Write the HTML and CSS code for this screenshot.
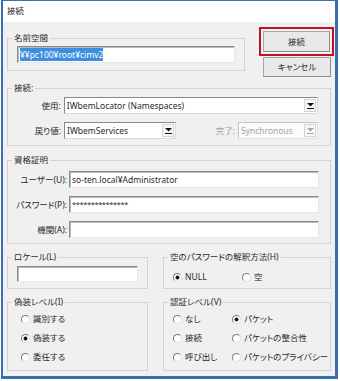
FILE: index.html
```html
<!DOCTYPE html>
<html lang="ja">
<head>
<meta charset="utf-8">
<title>接続</title>
<link rel="stylesheet" href="styles.css">
</head>
<body>
<div class="window">
  <div class="titlebar">接続</div>
  <div class="client">
    <div class="row-top">
      <fieldset class="group ns">
        <legend>名前空間</legend>
        <div class="inner ns-inner">
          <div class="field"><span class="selected">¥¥pc100¥root¥cimv2</span></div>
        </div>
      </fieldset>
      <div class="buttons">
        <div class="focus-ring"><div class="btn btn-ok">接続</div></div>
        <div class="btn btn-cancel">キャンセル</div>
      </div>
    </div>

    <fieldset class="group conn">
      <legend>接続:</legend>
      <div class="inner conn-inner">
        <div class="line">
          <span class="lbl lbl-conn">使用:</span>
          <div class="combo combo-wide"><span class="ctext">IWbemLocator (Namespaces)</span><span class="arrow"><svg width="7" height="6" viewBox="0 0 7 6"><path d="M0 0H7L3.5 3.6Z"/><rect y="5" width="7" height="1"/></svg></span></div>
        </div>
        <div class="line">
          <span class="lbl lbl-conn">戻り値:</span>
          <div class="combo combo-small"><span class="ctext">IWbemServices</span><span class="arrow"><svg width="7" height="6" viewBox="0 0 7 6"><path d="M0 0H7L3.5 3.6Z"/><rect y="5" width="7" height="1"/></svg></span></div>
          <span class="lbl lbl-done disabled">完了:</span>
          <div class="combo combo-done disabled"><span class="ctext">Synchronous</span><span class="arrow"><svg width="7" height="6" viewBox="0 0 7 6"><path d="M0 0H7L3.5 3.6Z"/><rect y="5" width="7" height="1"/></svg></span></div>
        </div>
      </div>
    </fieldset>

    <fieldset class="group cred">
      <legend>資格証明</legend>
      <div class="inner cred-inner">
        <div class="line">
          <span class="lbl lbl-cred">ユーザー(U):</span>
          <div class="field field-cred">so-ten.local¥Administrator</div>
        </div>
        <div class="line">
          <span class="lbl lbl-cred">パスワード(P):</span>
          <div class="field field-cred pw">***************</div>
        </div>
        <div class="line">
          <span class="lbl lbl-cred">機関(A):</span>
          <div class="field field-cred"></div>
        </div>
      </div>
    </fieldset>

    <div class="row-pair">
      <fieldset class="group left">
        <legend>ロケール(L)</legend>
        <div class="inner locale-inner">
          <div class="field"></div>
        </div>
      </fieldset>
      <fieldset class="group right">
        <legend>空のパスワードの解釈方法(H)</legend>
        <div class="inner radios-h">
          <label class="opt opt-null"><span class="radio on"></span>NULL</label>
          <label class="opt"><span class="radio"></span>空</label>
        </div>
      </fieldset>
    </div>

    <div class="row-pair row-last">
      <fieldset class="group left">
        <legend>偽装レベル(I)</legend>
        <div class="inner radios-v imp">
          <label class="opt"><span class="radio"></span>識別する</label>
          <label class="opt"><span class="radio on"></span>偽装する</label>
          <label class="opt"><span class="radio"></span>委任する</label>
        </div>
      </fieldset>
      <fieldset class="group right">
        <legend>認証レベル(V)</legend>
        <div class="inner auth">
          <label class="opt"><span class="radio"></span>なし</label>
          <label class="opt"><span class="radio on"></span>パケット</label>
          <label class="opt"><span class="radio"></span>接続</label>
          <label class="opt"><span class="radio"></span>パケットの整合性</label>
          <label class="opt"><span class="radio"></span>呼び出し</label>
          <label class="opt"><span class="radio"></span>パケットのプライバシー</label>
        </div>
      </fieldset>
    </div>
  </div>
</div>
</body>
</html>
```

FILE: styles.css
```css
* { box-sizing: border-box; }

html, body {
  margin: 0;
  padding: 0;
  background: #ffffff;
}

body {
  width: 340px;
  height: 381px;
  font-family: "Noto Sans", "Noto Sans CJK JP", sans-serif;
  font-size: 8.5px;
  line-height: 12px;
  font-feature-settings: "palt";
  color: #2a2a2a;
  overflow: hidden;
}

.window {
  margin-left: 1px;
  width: 337px;
  height: 379px;
  border: 2px solid #3d6db1;
  border-top-width: 1px;
  border-right-width: 3px;
  border-bottom-width: 3px;
  display: flex;
  flex-direction: column;
}

.titlebar {
  height: 21px;
  line-height: 20px;
  background: #ffffff;
  padding-left: 4px;
}

.client {
  flex: 1;
  background: #f0f0f0;
  padding: 5px 1px 0 4px;
  display: flex;
  flex-direction: column;
}

/* group boxes */
.group {
  margin: 0;
  padding: 0;
  min-width: 0;
  border: 1px solid #d3d3d3;
}

.group legend {
  padding: 0 2px;
  margin-left: 4px;
  line-height: 12px;
  height: 12px;
}

.row-top {
  display: flex;
  justify-content: space-between;
  align-items: flex-start;
}

.ns {
  width: 238px;
  margin-top: 5px;
}

.ns-inner {
  padding: 2px 9px 7px 9px;
}

/* inputs */
.field {
  height: 17px;
  background: #ffffff;
  border: 1px solid;
  border-color: #8a8a8a #e6e6e6 #e6e6e6 #8a8a8a;
  box-shadow: inset 1px 1px 0 #b9b9b9;
  padding: 0 2px;
  line-height: 15px;
  white-space: nowrap;
  overflow: hidden;
}

.selected {
  background: #3b8ee0;
  color: #ffffff;
  display: inline-block;
  line-height: 13px;
  margin-top: 1px;
}

/* buttons */
.buttons {
  width: 75px;
  display: flex;
  flex-direction: column;
}

.focus-ring {
  border: 2px solid #c3121e;
  padding: 2px;
  height: 29px;
}

.btn {
  height: 21px;
  border: 1px solid #a6a6a6;
  border-right-color: #8c8c8c;
  border-bottom-color: #8c8c8c;
  background: #e9e9e9;
  text-align: center;
  line-height: 19px;
}

.btn-cancel {
  width: 68px;
  height: 20px;
  margin: 1px 0 0 4px;
  line-height: 18px;
}

/* connection group */
.conn {
  margin: 5px 3px 0 0;
}

.conn-inner {
  padding: 3px 12px 6px 1px;
  display: flex;
  flex-direction: column;
  gap: 8px;
}

.line {
  display: flex;
  align-items: center;
}

.lbl {
  text-align: right;
  white-space: nowrap;
}

.lbl-conn {
  width: 52px;
  margin-right: 3px;
}

.disabled {
  color: #a2a2a2;
}

.combo {
  height: 17px;
  background: #ffffff;
  border: 1px solid;
  border-color: #8a8a8a #d9d9d9 #d9d9d9 #8a8a8a;
  display: flex;
  align-items: stretch;
}

.combo .ctext {
  flex: 1;
  padding-left: 2px;
  line-height: 15px;
  white-space: nowrap;
  overflow: hidden;
}

.combo .arrow {
  width: 12px;
  margin: 1px;
  border: 1px solid #d4d4d4;
  background: #f7f7f7;
  display: flex;
  align-items: center;
  justify-content: center;
}

.combo .arrow svg { fill: #111111; }

.combo-wide { width: 255px; }
.combo-small { width: 112px; }

.lbl-done {
  margin-left: auto;
  margin-right: 3px;
}

.combo-done {
  width: 80px;
  border-color: #c4c4c4 #e2e2e2 #e2e2e2 #c4c4c4;
  background: #fbfbfb;
}

.combo-done .arrow svg { fill: #a8a8a8; }

/* credentials */
.cred {
  margin: 8px 3px 0 0;
}

.cred-inner {
  padding: 5px 11px 5px 1px;
  display: flex;
  flex-direction: column;
  gap: 8px;
}

.lbl-cred {
  width: 58px;
  margin-right: 2px;
}

.field-cred {
  flex: 1;
}

.pw {
  font-size: 7.5px;
  letter-spacing: -0.4px;
}

/* paired rows */
.row-pair {
  display: flex;
  gap: 15px;
  margin: 7px 3px 0 0;
}

.row-pair .left { width: 141px; }
.row-pair .right { flex: 1; min-width: 0; }

.locale-inner {
  padding: 3px 9px 6px 9px;
}

.locale-inner .field { height: 16px; }

.opt {
  display: flex;
  align-items: center;
  white-space: nowrap;
  height: 12px;
}

.radio {
  width: 9px;
  height: 9px;
  border-radius: 50%;
  border: 1px solid;
  border-color: #7c7c7c #dedede #dedede #7c7c7c;
  background: #ffffff;
  margin-right: 3px;
  flex: none;
}

.radio.on {
  background: radial-gradient(circle, #111111 0 1.7px, #ffffff 2.3px);
}

.radios-h {
  display: flex;
  padding: 8px 9px 0 9px;
}

.opt-null { width: 69px; }

.radios-v {
  display: flex;
  flex-direction: column;
  gap: 7px;
  padding: 5px 9px 7px 13px;
}

.auth {
  display: grid;
  grid-template-columns: 59px auto;
  row-gap: 7px;
  padding: 5px 9px 7px 9px;
}
```
